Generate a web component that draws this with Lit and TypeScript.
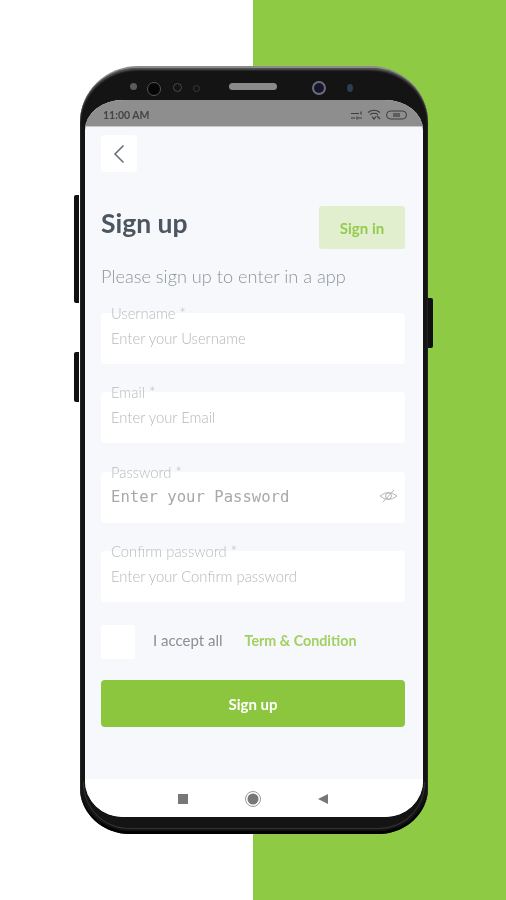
import { LitElement, html, css } from 'lit';
import { customElement } from 'lit/decorators.js';

const fields = [
	{ label: 'Username *', hint: 'Enter your Username' },
	{ label: 'Email *', hint: 'Enter your Email' },
	{ label: 'Password *', hint: 'Enter your Password', secret: true },
	{ label: 'Confirm password *', hint: 'Enter your Confirm password' },
];

@customElement('app-root')
export class AppRoot extends LitElement {
	static styles = css`
		:host {
			display: block;
			width: 506px;
			height: 900px;
			overflow: hidden;
			box-sizing: border-box;
			padding: 66px 78px 0 80px;
			background: linear-gradient(to right, #fff 253px, #8fca45 253px);
			font-family: Lato, 'Liberation Sans', sans-serif;
		}

		.phone {
			position: relative;
			box-sizing: border-box;
			width: 348px;
			height: 768px;
			padding: 32px 5px 0 5px;
			background: #141414;
			border-radius: 58px 58px 50px 50px / 56px 56px 46px 46px;
			border-top: 2px solid #8b8b8b;
			box-shadow: inset 0 2px 2px #555, inset 0 -3px 1px #000;
			filter: blur(0.4px);
		}
		.phone::after {
			content: '';
			position: absolute;
			left: 3px;
			right: 3px;
			bottom: 5px;
			height: 46px;
			border: 1px solid #333;
			border-top: 0;
			border-radius: 0 0 46px 46px;
			pointer-events: none;
		}

		.side {
			position: absolute;
			width: 5px;
			background: #111;
			border-radius: 2px 0 0 2px;
		}
		.side.volume-up { left: -6px; top: 127px; height: 108px; }
		.side.volume-down { left: -6px; top: 284px; height: 50px; }
		.side.power { right: -5px; top: 230px; height: 50px; border-radius: 0 2px 2px 0; }

		.sensors {
			position: absolute;
			top: 1px;
			left: 0;
			right: 0;
			height: 31px;
		}
		.dot {
			position: absolute;
			border-radius: 50%;
		}
		.speaker {
			position: absolute;
			left: 149px;
			top: 14px;
			width: 48px;
			height: 7px;
			border-radius: 4px;
			background: #8a8a8a;
		}

		.screen {
			height: 717px;
			display: flex;
			flex-direction: column;
			overflow: hidden;
			background: #f6f8fb;
			border-radius: 38px 38px 38px 38px / 30px 30px 36px 36px;
		}

		.status {
			flex: none;
			height: 27px;
			display: flex;
			align-items: center;
			justify-content: space-between;
			padding: 3px 15px 0 18px;
			box-sizing: border-box;
			background: #8e8e8e;
			border-bottom: 1px solid #c9c9c9;
			color: #444;
			font-size: 10.5px;
			font-weight: 700;
		}
		.status-icons {
			display: flex;
			align-items: center;
			gap: 4px;
		}

		.content {
			flex: 1;
			box-sizing: border-box;
			padding: 8px 18px 0 16px;
		}

		.back {
			width: 36px;
			height: 37px;
			display: flex;
			align-items: center;
			justify-content: center;
			background: #fff;
			border-radius: 4px;
		}

		.heading {
			display: flex;
			align-items: center;
			justify-content: space-between;
			margin-top: 34px;
			height: 43px;
		}
		h1 {
			margin: -10px 0 0;
			font-size: 26.5px;
			font-weight: 700;
			color: #4d5560;
		}
		.signin {
			width: 86px;
			height: 43px;
			display: flex;
			align-items: center;
			justify-content: center;
			border-radius: 3px;
			background: #e1efcf;
			color: #95cb4e;
			font-size: 15px;
			font-weight: 700;
		}

		.subtitle {
			margin: 16px 0 0;
			height: 22px;
			line-height: 22px;
			font-size: 18.2px;
			font-weight: 300;
			color: #8f9499;
		}

		.fields {
			display: flex;
			flex-direction: column;
			gap: 28.4px;
			margin-top: 26px;
		}
		.field {
			position: relative;
			height: 51px;
			box-sizing: border-box;
			padding: 16px 10px 0;
			display: flex;
			justify-content: space-between;
			background: #fff;
			border-radius: 4px;
			font-size: 14.8px;
			line-height: 18px;
			color: #b4b7bb;
			font-weight: 300;
		}
		.label {
			position: absolute;
			left: 10px;
			top: -9px;
			line-height: 18px;
			font-size: 14.8px;
			color: #b8bbbf;
		}
		.hint.secret {
			font-family: 'DejaVu Sans Mono', 'Liberation Mono', monospace;
			font-size: 15.6px;
			font-weight: 400;
			color: #a6a8aa;
		}
		.eye {
			margin: 1px -3px 0 0;
		}

		.terms {
			display: flex;
			align-items: center;
			margin-top: 23px;
			font-size: 15px;
		}
		.check {
			width: 34px;
			height: 34px;
			margin-right: 18px;
			background: #fff;
			border-radius: 3px;
		}
		.accept {
			color: #8b8f94;
			margin: 0 22px 4px 0;
		}
		.link {
			color: #a3d063;
			font-weight: 700;
			font-size: 14.3px;
			margin-bottom: 4px;
		}

		.submit {
			height: 47px;
			margin-top: 21px;
			display: flex;
			align-items: center;
			justify-content: center;
			border-radius: 4px;
			background: #8cc63f;
			color: #fff;
			font-size: 15px;
			font-weight: 700;
		}

		.nav {
			flex: none;
			height: 38px;
			display: flex;
			align-items: center;
			background: #fff;
			position: relative;
		}
		.nav svg {
			position: absolute;
			top: 10px;
		}
	`;

	render() {
		return html`<div class="phone">
			<div class="side volume-up"></div>
			<div class="side volume-down"></div>
			<div class="side power"></div>
			<div class="sensors">
				<div class="dot" style="left:50px;top:14px;width:7px;height:7px;background:#5b5b5b"></div>
				<div class="dot" style="left:67px;top:13px;width:12px;height:12px;background:#050505;border:1px solid #555"></div>
				<div class="dot" style="left:93px;top:14px;width:7px;height:7px;border:1px solid #4a4a4a"></div>
				<div class="dot" style="left:113px;top:16px;width:5px;height:5px;border:1px solid #3a3a3a"></div>
				<div class="speaker"></div>
				<div class="dot" style="left:232px;top:12px;width:10px;height:10px;background:#15152e;border:2px solid #6c6c78"></div>
				<div class="dot" style="left:267px;top:15px;width:6px;height:8px;background:#2c3d55"></div>
			</div>
			<div class="screen">
				<div class="status">
					<span>11:00 AM</span>
					<div class="status-icons">
						<svg width="13" height="10" viewBox="0 0 13 10" fill="none" stroke="#3c3c3c" stroke-width="1.2">
							<path d="M1 3.5h8M11 1.5v3M1 8h4M7 6.5v3M8 8h4" />
						</svg>
						<svg width="15" height="11" viewBox="0 0 15 11" fill="none" stroke="#3c3c3c" stroke-width="1.2">
							<path d="M1 3.5Q7 -1 13 3.5M3 5.5Q7 3 11 5.5M5 7.5L7 10L9 7.5M10 7l3 3" />
						</svg>
						<svg width="22" height="10" viewBox="0 0 22 10" fill="none" stroke="#3c3c3c">
							<rect x="0.5" y="1" width="20" height="8" rx="4" />
							<rect x="7" y="3" width="7" height="4" fill="#3c3c3c" stroke="none" opacity="0.6" />
						</svg>
					</div>
				</div>
				<div class="content">
					<div class="back">
						<svg width="12" height="20" viewBox="0 0 12 20" fill="none" stroke="#6b7076" stroke-width="1.6">
							<path d="M10.5 1.5L2 10l8.5 8.5" />
						</svg>
					</div>
					<div class="heading">
						<h1>Sign up</h1>
						<div class="signin">Sign in</div>
					</div>
					<p class="subtitle">Please sign up to enter in a app</p>
					<div class="fields">
						${fields.map(
							(f) => html`<div class="field">
								<span class="label">${f.label}</span>
								<span class="hint ${f.secret ? 'secret' : ''}">${f.hint}</span>
								${f.secret
									? html`<svg class="eye" width="19" height="14" viewBox="0 0 19 14" fill="none" stroke="#b4b7ba" stroke-width="1">
											<path d="M1 7Q9.5 0 18 7Q9.5 14 1 7Z" />
											<circle cx="9.5" cy="7" r="3" />
											<path d="M4 13L15 1" />
										</svg>`
									: ''}
							</div>`,
						)}
					</div>
					<div class="terms">
						<div class="check"></div>
						<span class="accept">I accept all</span>
						<span class="link">Term &amp; Condition</span>
					</div>
					<div class="submit">Sign up</div>
				</div>
				<div class="nav">
					<svg style="left:92px" width="12" height="20" viewBox="0 0 12 20"><rect x="1" y="5" width="10" height="10" fill="#777" /></svg>
					<svg style="left:159px" width="18" height="20" viewBox="0 0 18 20">
						<circle cx="9" cy="10" r="5.5" fill="#777" />
						<circle cx="9" cy="10" r="7.5" fill="none" stroke="#999" />
					</svg>
					<svg style="left:232px" width="12" height="20" viewBox="0 0 12 20"><path d="M11 5v10L1 10z" fill="#777" /></svg>
				</div>
			</div>
		</div>`;
	}
}
